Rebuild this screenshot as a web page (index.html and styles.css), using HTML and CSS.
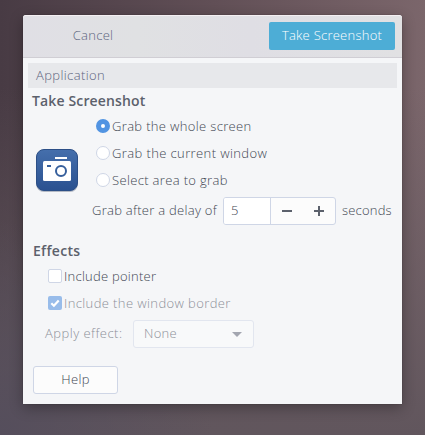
FILE: index.html
```html
<!DOCTYPE html>
<html lang="en">
<head>
    <meta charset="UTF-8">
    <meta name="viewport" content="width=device-width, initial-scale=1.0">
    <title>Take Screenshot</title>
    <link rel="stylesheet" href="styles.css">
</head>
<body>
    <div class="dialog">
        <!-- Header bar -->
        <div class="header">
            <button type="button" class="btn-cancel"><span class="t-cancel">Cancel</span></button>
            <button type="button" class="btn-primary"><span class="t-primary">Take Screenshot</span></button>
        </div>

        <div class="menubar"><span class="t-app">Application</span></div>

        <h2 class="title-shot"><span class="t-shot">Take Screenshot</span></h2>
        <div class="capture">
            <svg class="camera" width="44" height="45" viewBox="0 0 44 45">
                <defs>
                    <linearGradient id="blue" x1="0" y1="0" x2="0" y2="1">
                        <stop offset="0" stop-color="#456fac"/>
                        <stop offset="1" stop-color="#2a5190"/>
                    </linearGradient>
                </defs>
                <rect x="1" y="2" width="42" height="42" rx="8" fill="#1d2f50" opacity=".3"/>
                <rect x="1.5" y="1.5" width="41" height="41" rx="7.5" fill="url(#blue)" stroke="#2c4f87"/>
                <rect x="20" y="9" width="12" height="2" fill="#fff"/>
                <rect x="8" y="13" width="28" height="20" rx="1.5" fill="#fff"/>
                <rect x="12" y="17" width="4" height="2" fill="#365f9c"/>
                <circle cx="26" cy="23" r="5" fill="none" stroke="#365f9c" stroke-width="2"/>
            </svg>
            <div class="options">
                <label class="option"><span class="radio checked"></span><span class="t-screen">Grab the whole screen</span></label>
                <label class="option"><span class="radio"></span><span class="t-window">Grab the current window</span></label>
                <label class="option"><span class="radio"></span><span class="t-area">Select area to grab</span></label>
            </div>
        </div>

        <div class="delay">
            <span class="t-delay">Grab after a delay of</span>
            <div class="spin">
                <span class="value">5</span>
                <svg width="64" height="26" viewBox="0 0 64 26">
                    <path d="M11 13h10M43 13h10M48 8v10" stroke="#5c616c" stroke-width="2" fill="none"/>
                </svg>
            </div>
            <span class="t-seconds">seconds</span>
        </div>

        <h2 class="title-effects"><span class="t-effects">Effects</span></h2>
        <div class="effects">
            <label class="option"><span class="check"></span><span class="t-pointer">Include pointer</span></label>
            <label class="option disabled">
                <span class="check checked">
                    <svg width="14" height="14" viewBox="0 0 14 14">
                        <path d="M3.3 7.2l2.6 2.5 4.8-5.2" stroke="#fff" stroke-width="2.2" fill="none"/>
                    </svg>
                </span>
                <span class="t-border">Include the window border</span>
            </label>
        </div>
        <div class="apply disabled">
            <span class="t-apply">Apply effect:</span>
            <div class="select">
                <span class="t-none">None</span>
                <svg width="10" height="5" viewBox="0 0 10 5"><path d="M0 0h10L5 5z" fill="#a3a6b0"/></svg>
            </div>
        </div>

        <button type="button" class="btn-help"><span class="t-help">Help</span></button>
    </div>
</body>
</html>
```
FILE: styles.css
```css
* {
    box-sizing: border-box;
}
body {
    margin: 0;
    height: 435px;
    padding: 15px 23px;
    overflow: hidden;
    font-family: "Open Sans", "Noto Sans", sans-serif;
    font-size: 13px;
    font-weight: 300;
    line-height: 18px;
    white-space: nowrap;
    color: #414652;
    background: radial-gradient(circle at 0% 100%, #554e5c 0%, rgba(85, 78, 92, 0) 35%),
                linear-gradient(180deg, rgba(97, 86, 93, 0) 20%, #61565d 100%),
                linear-gradient(90deg, #483b44 0%, #614f56 50%, #7b666b 100%);
}
button {
    font: inherit;
    color: inherit;
    padding: 0 0 2px;
    margin: 0;
}
h2 {
    margin: 0;
    font-size: 14px;
    font-weight: 600;
    line-height: 20px;
    color: #5c616c;
}
.dialog {
    width: 379px;
    height: 389px;
    background-color: #f5f6f8;
    border-radius: 3px 3px 0 0;
    box-shadow: 0 0 1px rgba(0, 0, 0, 0.6), 0 4px 14px rgba(0, 0, 0, 0.3);
}
.header {
    display: flex;
    justify-content: space-between;
    align-items: flex-start;
    height: 43px;
    padding: 6px 7px 0;
    background: linear-gradient(90deg, #e0dfe5, #e0e1e3 30%, #dfdee4 60%, #e1e1e3);
    border-top: 1px solid #f4eff2;
    border-bottom: 1px solid #d0ced4;
    border-radius: 3px 3px 0 0;
}
.btn-cancel {
    width: 126px;
    height: 28px;
    border: none;
    background: none;
    color: #5c647e;
}
.btn-primary {
    width: 126px;
    height: 28px;
    border: none;
    border-radius: 2px;
    background-color: #4dadd6;
    color: #fff;
}
.menubar {
    height: 25px;
    margin: 5px 5px 0;
    padding: 3px 8px;
    background-color: #e7e8eb;
    color: #5c647e;
}
.title-shot {
    padding: 3px 9px 0;
    height: 25px;
}
.capture {
    display: flex;
    height: 81px;
    padding-left: 12px;
}
.camera {
    margin-top: 35px;
}
.options {
    margin-top: -1px;
    padding-left: 17px;
}
.option {
    display: flex;
    align-items: center;
    height: 27px;
}
.radio {
    width: 14px;
    height: 14px;
    margin-right: 2px;
    border: 1px solid #cfd6e6;
    border-radius: 50%;
    background-color: #fff;
}
.radio.checked {
    border: 5px solid #5294e2;
}
.delay {
    display: flex;
    align-items: center;
    height: 28px;
    margin: 3px 0 0 69px;
}
.spin {
    display: flex;
    width: 113px;
    height: 28px;
    margin-right: 6px;
    border: 1px solid #cfd6e6;
    border-radius: 3px;
    background-color: #fcfcfc;
}
.value {
    width: 47px;
    padding: 3px 7px;
    border-right: 1px solid #cfd6e6;
    border-radius: 2px 0 0 2px;
    background-color: #fff;
}
.title-effects {
    margin-top: 16px;
    padding-left: 10px;
    height: 22px;
}
.effects {
    margin-top: -1px;
    padding-left: 25px;
}
.check {
    display: block;
    width: 14px;
    height: 14px;
    margin-right: 2px;
    border: 1px solid #cfd6e6;
    border-radius: 2px;
    background-color: #fff;
}
.check.checked {
    border: none;
    background-color: #98bcea;
}
.check svg {
    display: block;
}
.disabled {
    color: #8d9099;
}
.apply {
    display: flex;
    align-items: center;
    height: 28px;
    margin: 4px 0 0 22px;
}
.select {
    display: flex;
    align-items: center;
    justify-content: space-between;
    width: 121px;
    height: 28px;
    padding: 0 11px 0 10px;
    border: 1px solid #e2e6ef;
    border-radius: 3px;
    background-color: #f8f9fa;
}
.btn-help {
    display: block;
    width: 85px;
    height: 28px;
    margin: 18px 0 0 10px;
    border: 1px solid #cfd6e6;
    border-radius: 3px;
    background-color: #fcfcfc;
}

/* Label spacing */
.t-delay {
    width: 131px;
    padding-bottom: 2px;
    letter-spacing: 0.28px;
}
.t-apply {
    width: 88px;
    padding-bottom: 2px;
    letter-spacing: 0.48px;
}
.t-none {
    padding-bottom: 2px;
    letter-spacing: 0.3px;
}
.t-seconds {
    padding-bottom: 2px;
    letter-spacing: 0.2px;
}
.t-screen,
.t-area {
    letter-spacing: 0.34px;
}
.t-window,
.t-border,
.t-app {
    letter-spacing: 0.39px;
}
.t-cancel,
.t-help,
.t-effects {
    letter-spacing: 0.3px;
}
.t-pointer,
.t-primary {
    letter-spacing: 0.25px;
}
.t-shot {
    letter-spacing: 0.14px;
}
```
